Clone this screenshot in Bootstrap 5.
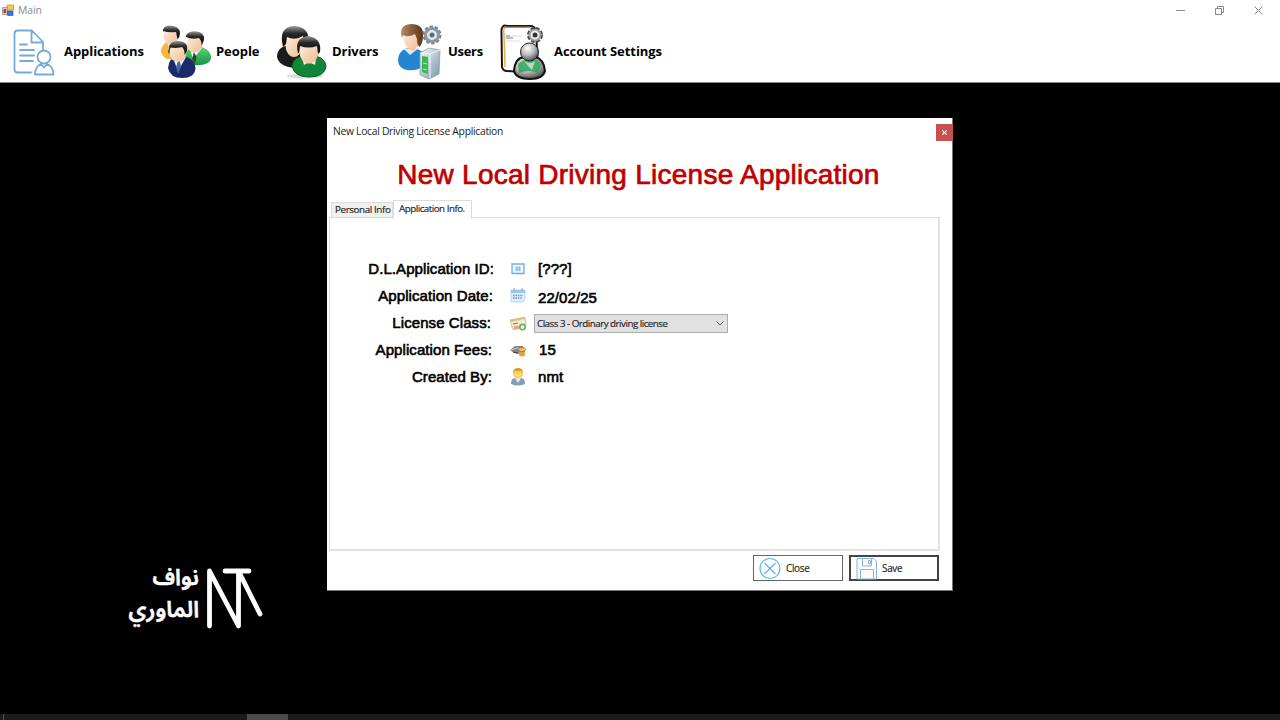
<!DOCTYPE html>
<html lang="en">
<head>
<meta charset="utf-8">
<title>Main</title>
<meta name="viewport" content="width=device-width, initial-scale=1">
<link href="https://cdn.jsdelivr.net/npm/bootstrap@5.3.0/dist/css/bootstrap.min.css" rel="stylesheet">
<style>
body{width:1280px;height:720px;background:#000;color:#000;font-family:"Open Sans","Noto Sans",sans-serif;line-height:1}
svg{display:block;overflow:visible}
.titlebar{height:20px;color:#8b8b8b;font-size:10.4px;padding-left:2px;letter-spacing:-.1px}
.winctl{gap:30px;padding-right:17px}
.menu{height:63px;border-bottom:1px solid #888}
.menu a{font-size:13px;font-weight:700;color:#000;text-decoration:none;height:63px;white-space:nowrap;letter-spacing:-.06px}
.desktop{background:#000}
.dlg{position:absolute;left:327px;top:35px;width:626px;height:473px;background:#fff;border:solid #777;border-width:0 1px 1px 0}
.dlg-title{height:35px;padding:8px 0 0 6px;font-size:10.3px;color:#222;letter-spacing:-.28px}
.dlg-x{width:17px;height:17px;background:#c75050;margin-top:-2px;margin-right:-1px}
.big{font:28px "Liberation Sans",sans-serif;color:#c00000;letter-spacing:.25px;-webkit-text-stroke:.7px #c00000;height:47px;padding:6px 2px 0 0;white-space:nowrap}
.tahoma{font-family:"Open Sans","Noto Sans",sans-serif;color:#222;white-space:nowrap;-webkit-text-stroke:.15px #222}
.tabs{height:18px;padding-left:4px}
.tab-off{width:62px;height:16px;background:#f0f0f0;border:1px solid #dcdcdc;border-bottom:0;font-size:9.8px;padding:2px 0 0 3px;letter-spacing:-.38px}
.tab-on{width:79px;height:19px;background:#fff;border:1px solid #dcdcdc;border-bottom:0;font-size:9.8px;padding:3px 0 0 5px;margin-bottom:-1px;letter-spacing:-.5px;z-index:1}
.pane{width:611px;height:334px;margin-top:-1px;margin-left:2px;border:1px solid #dcdcdc;border-right:2px solid #e3e3e3;border-bottom:2px solid #e3e3e3;padding:38px 0 0 0}
.line{height:26.8px;font:15px/27px "Liberation Sans",sans-serif;-webkit-text-stroke:.6px #000;white-space:nowrap;letter-spacing:.08px}
.lbl{width:164px;text-align:right;margin-top:-1px}
.val{margin-top:-1px}
.ico{width:16px;margin-left:16px;margin-right:12px}
.combo{width:194px;height:19px;background:#e1e1e1;border:1px solid #adadad;font-size:9.8px;line-height:17px;padding-left:2px;margin-left:-4px;letter-spacing:-.51px;margin-top:2px}
.act{width:90px;height:26px;background:#fff;border:1px solid #666;font-size:10px;letter-spacing:-.35px;padding:0 0 0 5px}
.act.main{border:2px solid #444;padding-left:5px}
.mark-nt{position:absolute;left:120px;top:480px;width:150px;height:72px;color:#fff}
.ar{font:600 22.5px/30px "Noto Sans Arabic","DejaVu Sans",sans-serif;-webkit-text-stroke:.5px #fff;width:79px;text-align:right;white-space:nowrap}
.task{height:6px;background:#1b1b1b}
</style>
</head>
<body class="d-flex flex-column overflow-hidden m-0">
<svg width="0" height="0" class="position-absolute"><defs>
<linearGradient id="skin" x1="0" x2="1" y1="0" y2="1"><stop stop-color="#fff3e4"/><stop offset="1" stop-color="#efb98f"/></linearGradient>
<linearGradient id="hair" x1="0" x2="0" y1="0" y2="1"><stop stop-color="#999"/><stop offset=".35" stop-color="#2b2b2b"/><stop offset="1" stop-color="#000"/></linearGradient>
<linearGradient id="green" x1="0" x2="0" y1="0" y2="1"><stop stop-color="#5ed374"/><stop offset="1" stop-color="#169744"/></linearGradient>
<linearGradient id="steel" x1="0" x2="1" y1="0" y2="1"><stop stop-color="#f5fafc"/><stop offset=".5" stop-color="#b3c7d2"/><stop offset="1" stop-color="#7c96a6"/></linearGradient>
<linearGradient id="brown" x1="0" x2="1"><stop stop-color="#b08a68"/><stop offset="1" stop-color="#5e3312"/></linearGradient>
<radialGradient id="glass" cx=".4" cy=".3" r=".75"><stop stop-color="#fff"/><stop offset=".5" stop-color="#bbb"/><stop offset="1" stop-color="#444"/></radialGradient>
</defs></svg>
<header class="bg-white">
<div class="titlebar d-flex align-items-center">
<svg width="13" height="13" viewBox="0 0 13 13"><path d="M5 1h6.500v5H5z" fill="#ffca45" stroke="#b98830" stroke-width=".7"/><path d="M.5 3.500h5v7h-5z" fill="#d9d0cc" stroke="#888" stroke-width=".7"/><path d="M1.500 5h2.700v4H1.500z" fill="#cc3434"/><path d="M5.500 7h5.500v4.500H5.500z" fill="#3479d5" stroke="#275ca6" stroke-width=".7"/></svg>
<span style="margin-left:3px">Main</span>
<div class="winctl d-flex align-items-center ms-auto"><svg width="9" height="9" stroke="#888" fill="none"><path d="M0 4.500h9"/></svg><svg width="9" height="9" stroke="#888" fill="none"><path d="M.5 2.500h6v6h-6zM2.500 2.500v-2h6v6h-2"/></svg><svg width="9" height="9" stroke="#888" fill="none"><path d="M.5.5l8 8M8.500.5l-8 8"/></svg></div>
</div>
<nav class="menu d-flex">
<a href="#" class="d-flex align-items-center" style="width:160px;padding-left:13px">
<svg width="51" height="50" viewBox="0 0 51 50" fill="none" stroke="#78a9dc" stroke-width="1.800" stroke-linejoin="round" stroke-linecap="round"><path d="M18 45.500H4.500Q1.500 45.500 1.500 42.500V6.500Q1.500 3.500 4.500 3.500H19L30 15V22M18.500 3.500V15.500H30M7 17.500h7M7 23h14M7 28.500h14M7 34h13"/><circle cx="31" cy="30" r="6.500"/><path d="M22 47.500C22 41 24.500 38.500 28 37l3 3.500 3-3.500c4 1.500 6.500 4 6.500 10.500z"/></svg><span>Applications</span></a>
<a href="#" class="d-flex align-items-center" style="width:116px">
<svg width="56" height="62" viewBox="0 0 56 62"><path d="M1 29Q3 21 10 20Q22 20 23 31L17 38H7Q1 35 1 29z" fill="#f4b545"/><path d="M7 21l4 11 6-10z" fill="#fff"/><path d="M10 24l-2 7 3 4 2-8z" fill="#333"/><ellipse cx="11" cy="15" rx="7.500" ry="9" fill="url(#skin)"/><path d="M3 11Q2 5 10 4.500Q20 5 20 12Q20 16 17.500 18L16 11Q9 12 3 10z" fill="url(#hair)"/><path d="M24 35Q27 26 37 25.500Q49 26 51 35Q52 43 40 44Q29 45 24 40z" fill="url(#green)"/><path d="M30 28l3 10 9-11z" fill="#fff"/><path d="M34 31l-2 7 3 5 1.500-7z" fill="#274638"/><ellipse cx="34.500" cy="22" rx="7.800" ry="9.500" fill="url(#skin)"/><path d="M25.500 17Q26 10 35 10.200Q45 11 44 19L41.500 25Q42 20 39 17Q32 19 26 16z" fill="url(#hair)"/><path d="M8 47Q9 36 19 35Q34 35 35.500 47Q35 57 22 57Q10 57 8 47z" fill="#1b2b67"/><path d="M13 37l5 13 8-14z" fill="#fff"/><path d="M18 40l-2 6 2 7 3-7-1-6z" fill="#4267a5"/><ellipse cx="18" cy="31.500" rx="8.500" ry="9.500" fill="url(#skin)"/><path d="M8.500 27Q10 19.500 19 20Q29 21 27 30L24.500 34Q25 29 22 26Q15 28 9 26z" fill="url(#hair)"/></svg><span>People</span></a>
<a href="#" class="d-flex align-items-center" style="width:121px">
<svg width="56" height="62" viewBox="0 0 56 62"><ellipse cx="29" cy="55" rx="18" ry="2.500" fill="#ddd"/><path d="M1 36Q1 24 17 24Q31 25 31 41Q25 49 12 46Q2 43 1 36z" fill="#1b1b1b"/><ellipse cx="18" cy="24" rx="8.500" ry="12" fill="url(#skin)"/><path d="M7 26Q2 6 18 5Q35 6 32 23L28 22L27 15Q19 20 11 16L10 23Z" fill="url(#hair)"/><path d="M16 45Q17 35 33 34Q49 35 50 45Q49 56 33 56Q18 56 16 45z" fill="#118638" stroke="#086125"/><path d="M26 37l2 7 5-3 6 3 1-7z" fill="#eee"/><ellipse cx="33" cy="31" rx="9.500" ry="11.500" fill="url(#skin)"/><path d="M22 32Q18 17 32 15Q46 17 44 31L42 33L41 25Q32 28 24 25L23 32Z" fill="url(#hair)"/></svg><span>Drivers</span></a>
<a href="#" class="d-flex align-items-center" style="width:102px">
<svg width="51" height="62" viewBox="0 0 51 62"><path d="M1 39Q2 27 14 27Q29 28 29 41Q24 51 10 49Q1 47 1 39z" fill="#2684d1"/><path d="M7 28l6 6 9-7z" fill="#d7eaf8"/><path d="M6 16Q8 5 17 6Q25 9 23 22L17 30Q8 29 6 16z" fill="url(#skin)"/><path d="M5 17Q1 4 14 3Q27 3 26 15Q26 22 22.500 26Q20 24 20 18L18 13Q11 17 6 14z" fill="url(#brown)"/><circle cx="35" cy="14" r="7.500" fill="none" stroke="#78838d" stroke-width="4" stroke-dasharray="3 1.710"/><circle cx="35" cy="14" r="6.500" fill="#e5eaee" stroke="#8c979f" stroke-width="3"/><circle cx="35" cy="14" r="2.500" fill="#536c83"/><path d="M23 32L32 27L43 29L42 53L32 58L23 54z" fill="url(#steel)" stroke="#83a2b2" stroke-width=".8"/><path d="M23 32l10 1 10-4M33 33v24" stroke="#f3fafc" fill="none"/><path d="M25 35l6 1v17l-6-2z" fill="#37b94c"/><path d="M26 42l4 1M26 48l4 1" stroke="#b8ecbd"/></svg><span style="letter-spacing:-.3px">Users</span></a>
<a href="#" class="d-flex align-items-center">
<svg width="55" height="62" viewBox="0 0 55 62"><path d="M4 5.500Q2 7 2.500 12L3 46Q4 50 8 50L36 52Q40 50 39 46L37 10Q36 5 31 5H8Q5 4 4 5.500z" fill="#fff" stroke="#161616" stroke-width="2"/><path d="M6 7Q4 8 5 13L6 46" fill="none" stroke="#efae45" stroke-width="1.500"/><path d="M5 5.500h26v1.500H5z" fill="#bd8b47"/><path d="M7 15h4M7 17h7" stroke="#777"/><path d="M11 15h12M7 20h14" stroke="#ddd"/><circle cx="36" cy="14" r="6" fill="none" stroke="#444" stroke-width="4" stroke-dasharray="3.300 1.412"/><circle cx="36" cy="14" r="5.500" fill="#eee" stroke="#999" stroke-width="2"/><circle cx="36" cy="14" r="2.500" fill="#333"/><path d="M15 50Q16 37 25 36H36Q45 38 46 50Q44 58 31 58Q17 58 15 50z" fill="url(#glass)" stroke="#111" stroke-width="2"/><path d="M19 43Q25 37 31 39Q39 36 42 44L39 52Q30 48 20 52z" fill="#30a35d" opacity=".85"/><circle cx="30.500" cy="31" r="9" fill="url(#glass)" stroke="#222" stroke-width="1"/><path d="M25 40q6 4 11 0l-3 9-3-3z" fill="#b8d8c4"/></svg><span>Account Settings</span></a>
</nav>
</header>
<main class="desktop flex-grow-1 position-relative">
<section class="dlg d-flex flex-column">
<div class="dlg-title d-flex justify-content-between"><span>New Local Driving License Application</span><div class="dlg-x d-flex align-items-center justify-content-center"><svg width="5" height="5" stroke="#fff" stroke-width="1.200"><path d="M.3.3l4.400 4.400M4.700.3L.3 4.700"/></svg></div></div>
<h1 class="big text-center m-0">New Local Driving License Application</h1>
<div class="tabs tahoma d-flex align-items-end"><div class="tab-off">Personal Info</div><div class="tab-on">Application Info.</div></div>
<div class="pane">
<div class="line d-flex align-items-center"><div class="lbl">D.L.Application ID:</div><div class="ico"><svg width="16" height="16" fill="none"><path d="M2 3h12v9.500H2z" fill="#eef6fd" stroke="#72addf" stroke-width="1.300"/><path d="M5 5.500h6v5H5z" fill="#d4e8f8"/><path d="M7 5.500v4.500M9.500 5.500v4.500M5.500 6.700h5M5.500 9h5" stroke="#65a4da" stroke-width=".6"/></svg></div><span class="val">[???]</span></div>
<div class="line d-flex align-items-center"><div class="lbl"><span style="margin-right:1px">Application Date:</span></div><div class="ico"><svg width="16" height="16" fill="none"><path d="M1 2h14v9l-2 3H1z" fill="#e1effb" stroke="#9cc7eb" stroke-width=".7"/><path d="M1 2h14v3H1z" fill="#9bc7ec"/><path d="M4 0v3M12 0v3" stroke="#76abd8"/><path d="M3 7.500h10M3 10h9" stroke="#619ed4" stroke-width="1.600" stroke-dasharray="1.600 .8"/></svg></div><span class="val" style="padding-top:3px">22/02/25</span></div>
<div class="line d-flex align-items-center"><div class="lbl"><span style="margin-right:3px">License Class:</span></div><div class="ico"><svg width="16" height="16"><path d="M0 5L15 2l1 9-13 4z" fill="#eeeadc" stroke="#b6b3aa" stroke-width=".7"/><path d="M0 5l15-3v2L1 7z" fill="#dbc373"/><path d="M3 9l5-1" stroke="#777"/><path d="M4 11h5v3H4z" fill="#e9a37d"/><circle cx="12.500" cy="12" r="2.700" fill="#fff" stroke="#62ba5b" stroke-width="1.700"/></svg></div><div class="combo tahoma d-flex align-items-center"><span>Class 3 - Ordinary driving license</span><svg class="ms-auto" style="margin-right:3px" width="8" height="5" fill="none" stroke="#555"><path d="M.5.5L4 4 7.500.5"/></svg></div></div>
<div class="line d-flex align-items-center"><div class="lbl"><span style="margin-right:2px">Application Fees:</span></div><div class="ico"><svg width="16" height="16"><path d="M0 8l5-4 8 0 2 4-6 4-5-1z" fill="#858585"/><path d="M1 8l6-2 5 1" stroke="#ccc" fill="none"/><path d="M3 10l5 1" stroke="#444"/><path d="M9 8v5q3 3 6 0V8z" fill="#d27920"/><ellipse cx="12" cy="7.500" rx="3.500" ry="2" fill="#f5be63" stroke="#aa651e" stroke-width=".6"/><path d="M9 10.500q3 2 6 0M9 12.500q3 2 6 0" stroke="#ffd488" fill="none" stroke-width=".8"/></svg></div><span class="val" style="margin-left:1px">15</span></div>
<div class="line d-flex align-items-center"><div class="lbl"><span style="margin-right:2px">Created By:</span></div><div class="ico"><svg width="16" height="18"><path d="M1 16Q1 10 5 10h6q4 0 4 6-7 3-14 0z" fill="#829eb9"/><path d="M5 10l3 5 3-5z" fill="#e2eef7"/><circle cx="8" cy="5.500" r="5" fill="#ffcb54"/><path d="M3 5Q3 0 8 0t5 5l-2-2H5z" fill="#dba02c"/><path d="M5 6l3 2 3-2" stroke="#fff3b4" fill="none"/></svg></div><span class="val">nmt</span></div>
</div>
<div class="d-flex tahoma" style="gap:6px;padding:4px 0 0 426px">
<div class="act d-flex align-items-center"><svg width="22" height="22" fill="none" stroke="#55b9ee" stroke-width="1.200"><circle cx="11" cy="11.500" r="10"/><path d="M5.500 6l11 11M16.500 6l-11 11"/></svg><span style="margin-left:5px">Close</span></div>
<div class="act main d-flex align-items-center"><svg width="22" height="22" fill="none" stroke="#85b4e2"><path d="M1 1.500h17l2.500 3v17.500H1zM6.500 1.500v7.500h9V1.500M4.500 21.500V12.500h13v9M12.500 3.500h2v3.500h-2z"/></svg><span style="margin-left:4px">Save</span></div>
</div>
</section>
<div class="mark-nt d-flex"><div dir="rtl" lang="ar"><div class="ar d-flex" style="margin-bottom:2px">نواف</div><div class="ar d-flex">الماوري</div></div><svg width="66" height="70" fill="none" stroke="#fff" stroke-width="4.800" stroke-linecap="round" stroke-linejoin="round" class="ms-2"><path d="M2.500 63V8l29 55V8M18 8h24M32 9l21 42"/></svg></div>
</main>
<footer class="task d-flex"><span style="width:3px"></span><span style="width:1px;background:#555"></span><span style="width:243px"></span><span style="width:41px;background:#4b4b4b"></span></footer>
<script src="https://cdn.jsdelivr.net/npm/bootstrap@5.3.0/dist/js/bootstrap.bundle.min.js"></script>
</body>
</html>
